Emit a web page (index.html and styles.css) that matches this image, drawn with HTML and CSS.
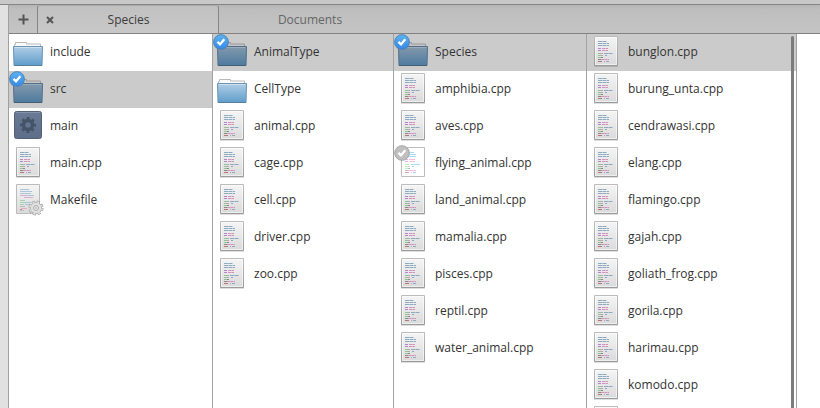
FILE: index.html
```html
<!DOCTYPE html>
<html lang="en">
<head>
<meta charset="utf-8">
<title>Species</title>
<link rel="stylesheet" href="styles.css">
</head>
<body>
<svg class="defs" aria-hidden="true">
  <defs>
    <linearGradient id="blue" x1="0" y1="0" x2="0" y2="1"><stop offset="0" stop-color="#b1cee6"/><stop offset="1" stop-color="#5f9dca"/></linearGradient>
    <linearGradient id="dark" x1="0" y1="0" x2="0" y2="1"><stop offset="0" stop-color="#8499ac"/><stop offset="1" stop-color="#4d7b9f"/></linearGradient>
    <linearGradient id="paper" x1="0" y1="0" x2="0" y2="1"><stop offset="0" stop-color="#f5f5f5"/><stop offset="1" stop-color="#dadada"/></linearGradient>
    <linearGradient id="edge" x1="0" y1="0" x2="0" y2="1"><stop offset="0" stop-color="#bcbcbc"/><stop offset="1" stop-color="#9b9b9b"/></linearGradient>
    <linearGradient id="badge" x1="0" y1="0" x2="0" y2="1"><stop offset="0" stop-color="#5eb3ee"/><stop offset="1" stop-color="#3689e6"/></linearGradient>
    <linearGradient id="slate" x1="0" y1="0" x2="0" y2="1"><stop offset="0" stop-color="#6b7b97"/><stop offset="1" stop-color="#5c6d8a"/></linearGradient>
    <g id="tick"><path d="M1.500 6.900l2.500 2.400 4.300-5" fill="none" stroke="#fff" stroke-width="2.300"/></g>
    <symbol id="folder" viewBox="0 0 32 32">
      <path d="M2.500 12V9.500h1v-2h11v1.500h14V12" fill="#fafafa" stroke="#b9b9b9"/>
      <path d="M1.500 11.500h29l-.5 19h-28z" fill="url(#blue)" stroke="#6b93b3"/>
      <path d="M2.500 12.500h27" stroke="#cfe1f0"/>
      <path d="M2 30.500h28" stroke="#567f9e"/>
    </symbol>
    <symbol id="folder-sel" viewBox="0 0 32 32">
      <path d="M2.500 12V9.500h1v-2h11v1.500h14V12" fill="#c5c5c5" stroke="#999"/>
      <path d="M1.500 11.500h29l-.5 19h-28z" fill="url(#dark)" stroke="#526f87"/>
      <path d="M2.500 12.500h27" stroke="#9babb9"/>
      <path d="M2 30.500h28" stroke="#3f5f78"/>
      <circle cx="5" cy="7.300" r="8" fill="#888" opacity=".6"/>
      <circle cx="5" cy="7" r="7.300" fill="url(#badge)" stroke="#3a84c5" stroke-width=".8"/>
      <use href="#tick"/>
    </symbol>
    <g id="lines" fill="none" stroke-width="1">
      <path stroke="#8cabc0" stroke-dasharray="4 .4" d="M8 6.500h9M8 8.500h11M8 10.500h11M14 18.500h9M15 20.500h2M16 26.500h3"/>
      <path stroke="#b184cc" d="M8 13.500h3M8 15.500h3"/>
      <path stroke="#d392bb" stroke-dasharray="3 .4" d="M12 13.500h6M12 15.500h6M12 18.500h1M11 20.500h2M11 24.500h8M14 26.500h1"/>
      <path stroke="#8fc394" d="M8 18.500h4M8 20.500h3M8 22.500h3"/>
      <path stroke="#858b85" d="M11 22.500h2M8 24.500h3M10 26.500h2"/>
      <path stroke="#df6767" d="M8 26.500h2"/>
    </g>
    <symbol id="file" viewBox="0 0 32 32">
      <path d="M4 31.500h24" stroke="#000" opacity=".12"/>
      <path d="M4.500 1.500h23v29h-23z" fill="url(#paper)" stroke="url(#edge)"/>
      <path d="M5.500 2.500h21v27h-21z" fill="none" stroke="#fff" opacity=".55"/>
      <use href="#lines"/>
    </symbol>
    <symbol id="file-cut" viewBox="0 0 32 32">
      <path d="M4.500 1.500h23v29h-23z" fill="#fff" stroke="#bdbdbd"/>
      <g fill="none">
        <path stroke="#a6dcf6" d="M12 6.500h5M12 8.500h7M10 10.500h9M14 18.500h9M15 20.500h2M16 26.500h3"/>
        <path stroke="#dfb0f6" d="M8 13.500h3M8 15.500h3"/>
        <path stroke="#fbbce4" d="M12 13.500h6M12 15.500h6M11 20.500h2M11 24.500h8M14 26.500h1"/>
        <path stroke="#b5f5ba" d="M8 18.500h4M8 20.500h3M8 22.500h3"/>
        <path stroke="#bbb" d="M11 22.500h2M8 24.500h3M10 26.500h2"/>
        <path stroke="#ff8f8f" d="M8 26.500h2"/>
      </g>
      <circle cx="5" cy="7" r="7.300" fill="#c0c0c0" stroke="#a5a5a5" stroke-width="1"/>
      <use href="#tick"/>
    </symbol>
    <symbol id="app" viewBox="0 0 32 32">
      <rect x="2.500" y="2.500" width="27" height="27" rx="2" fill="url(#slate)" stroke="#526079"/>
      <path d="M4 3.500h24" stroke="#8391a9"/>
      <circle cx="16" cy="16" r="4.500" fill="none" stroke="#455368" stroke-width="3.400"/>
      <circle cx="16" cy="16" r="6.900" fill="none" stroke="#455368" stroke-width="2.200" stroke-dasharray="2.900 2.519" stroke-dashoffset="1.450"/>
    </symbol>
    <symbol id="make" viewBox="0 0 32 32">
      <path d="M4.500 1.500h23v29h-23z" fill="url(#paper)" stroke="#bbb"/>
      <g fill="none">
        <path stroke="#a9c6da" d="M8 6.500h9M8 8.500h12M8 10.500h11M14 12.500h8M12 19.500h7M13 21.500h5"/>
        <path stroke="#dcaecb" d="M8 12.500h6M12 14.500h9M9 25.500h6"/>
        <path stroke="#a8d2ad" d="M8 17.500h5M8 19.500h4M8 21.500h4"/>
        <path stroke="#b8bdc2" d="M8 23.500h5M8 27.500h4"/>
        <path stroke="#e08a8a" d="M8 26.500h2"/>
      </g>
      <circle cx="24" cy="25" r="6.300" fill="none" stroke="#999" stroke-width="2.400" stroke-dasharray="2.900 2.048"/>
      <circle cx="24" cy="25" r="5.700" fill="#e2e2e2" stroke="#a5a5a5" stroke-width=".8"/>
      <circle cx="24" cy="25" r="6.100" fill="none" stroke="#e2e2e2" stroke-width="1.700" stroke-dasharray="1.900 2.890" stroke-dashoffset="-.5"/>
      <circle cx="24" cy="25" r="2.500" fill="#eee" stroke="#aaa"/>
      <circle cx="24" cy="25" r=".8" fill="#999"/>
    </symbol>
  </defs>
</svg>
<div class="window">
  <aside class="sidebar"></aside>
  <main class="browser">
    <nav class="tabs">
      <button class="new-tab" aria-label="New tab"><svg width="11" height="11"><path d="M5.500 .5v10M.5 5.500h10" stroke="#555" stroke-width="2"/></svg></button>
      <div class="tab active"><svg class="close" width="8" height="8"><path d="M1 1l6 6M7 1L1 7" stroke="#555" stroke-width="2"/></svg><span>Species</span></div>
      <div class="tab"><span>Documents</span></div>
    </nav>
    <div class="columns">
      <ul class="column c1">
        <li><svg><use href="#folder"/></svg>include</li>
        <li class="selected"><svg><use href="#folder-sel"/></svg>src</li>
        <li><svg><use href="#app"/></svg>main</li>
        <li><svg><use href="#file"/></svg>main.cpp</li>
        <li><svg><use href="#make"/></svg>Makefile</li>
      </ul>
      <ul class="column c2">
        <li class="selected"><svg><use href="#folder-sel"/></svg>AnimalType</li>
        <li><svg><use href="#folder"/></svg>CellType</li>
        <li><svg><use href="#file"/></svg>animal.cpp</li>
        <li><svg><use href="#file"/></svg>cage.cpp</li>
        <li><svg><use href="#file"/></svg>cell.cpp</li>
        <li><svg><use href="#file"/></svg>driver.cpp</li>
        <li><svg><use href="#file"/></svg>zoo.cpp</li>
      </ul>
      <ul class="column c3">
        <li class="selected"><svg><use href="#folder-sel"/></svg>Species</li>
        <li><svg><use href="#file"/></svg>amphibia.cpp</li>
        <li><svg><use href="#file"/></svg>aves.cpp</li>
        <li><svg><use href="#file-cut"/></svg>flying_animal.cpp</li>
        <li><svg><use href="#file"/></svg>land_animal.cpp</li>
        <li><svg><use href="#file"/></svg>mamalia.cpp</li>
        <li><svg><use href="#file"/></svg>pisces.cpp</li>
        <li><svg><use href="#file"/></svg>reptil.cpp</li>
        <li><svg><use href="#file"/></svg>water_animal.cpp</li>
      </ul>
      <ul class="column c4">
        <li class="selected"><svg><use href="#file"/></svg>bunglon.cpp</li>
        <li><svg><use href="#file"/></svg>burung_unta.cpp</li>
        <li><svg><use href="#file"/></svg>cendrawasi.cpp</li>
        <li><svg><use href="#file"/></svg>elang.cpp</li>
        <li><svg><use href="#file"/></svg>flamingo.cpp</li>
        <li><svg><use href="#file"/></svg>gajah.cpp</li>
        <li><svg><use href="#file"/></svg>goliath_frog.cpp</li>
        <li><svg><use href="#file"/></svg>gorila.cpp</li>
        <li><svg><use href="#file"/></svg>harimau.cpp</li>
        <li><svg><use href="#file"/></svg>komodo.cpp</li>
        <li><svg><use href="#file"/></svg></li>
      </ul>
    </div>
  </main>
</div>
</body>
</html>
```
FILE: styles.css
```css
* { box-sizing: border-box; }
body {
  margin: 0;
  font: 12px/18px "Open Sans", "Noto Sans", sans-serif;
  color: #333;
  background: #fff;
}
.defs { position: absolute; width: 0; height: 0; }
symbol { overflow: visible; }
.window {
  display: flex;
  height: 408px;
  overflow: hidden;
  border-top: 4px solid #c8c8c8;
}
.sidebar {
  width: 9px;
  flex: none;
  background: #e1e1e1;
  border-right: 1px solid #a0a0a0;
  border-top: 1px solid #858585;
}
.browser { flex: 1; display: flex; flex-direction: column; min-width: 0; }
.tabs {
  display: flex;
  flex: none;
  height: 30px;
  border-top: 1px solid #858585;
  border-bottom: 1px solid #828282;
  background: linear-gradient(#b5b5b5, #bebebe 4px, #c4c4c4);
}
.new-tab {
  width: 28px;
  padding: 0;
  border: 0;
  background: none;
  display: flex;
  align-items: center;
  justify-content: center;
}
.tab {
  width: 182px;
  display: flex;
  align-items: center;
  justify-content: center;
  border-top: 1px solid transparent;
  color: #666;
}
.tab.active {
  color: #3c3c3c;
  border: 1px solid #868686;
  border-bottom: 0;
  border-top-color: #aaa;
  border-radius: 3px 3px 0 0;
  background: linear-gradient(#c1c1c1, #c8c8c8);
}
.tab.active span { flex: 1; text-align: center; padding-right: 15px; }
.close { margin-left: 8px; }
.columns { display: flex; flex: 1; min-height: 0; }
.column {
  margin: 0;
  padding: 0;
  list-style: none;
  border-right: 1px solid #a2a2a2;
  overflow: hidden;
  flex: none;
}
.column li {
  height: 37px;
  padding: 1px 0 0 3px;
  display: flex;
  align-items: flex-start;
  gap: 6px;
  line-height: 34px;
  white-space: nowrap;
}
.column svg { width: 32px; height: 32px; flex: none; overflow: visible; }
.column .selected { background: #cbcbcb; }
.c1 { width: 204px; }
.c2 { width: 181px; }
.c3 { width: 193px; }
.c4 { width: 210px; position: relative; }
.c4::after {
  content: "";
  position: absolute;
  top: 2px;
  right: 2px;
  width: 3px;
  height: 380px;
  border-radius: 2px 2px 0 0;
  background: #7c7c7c;
}
```
